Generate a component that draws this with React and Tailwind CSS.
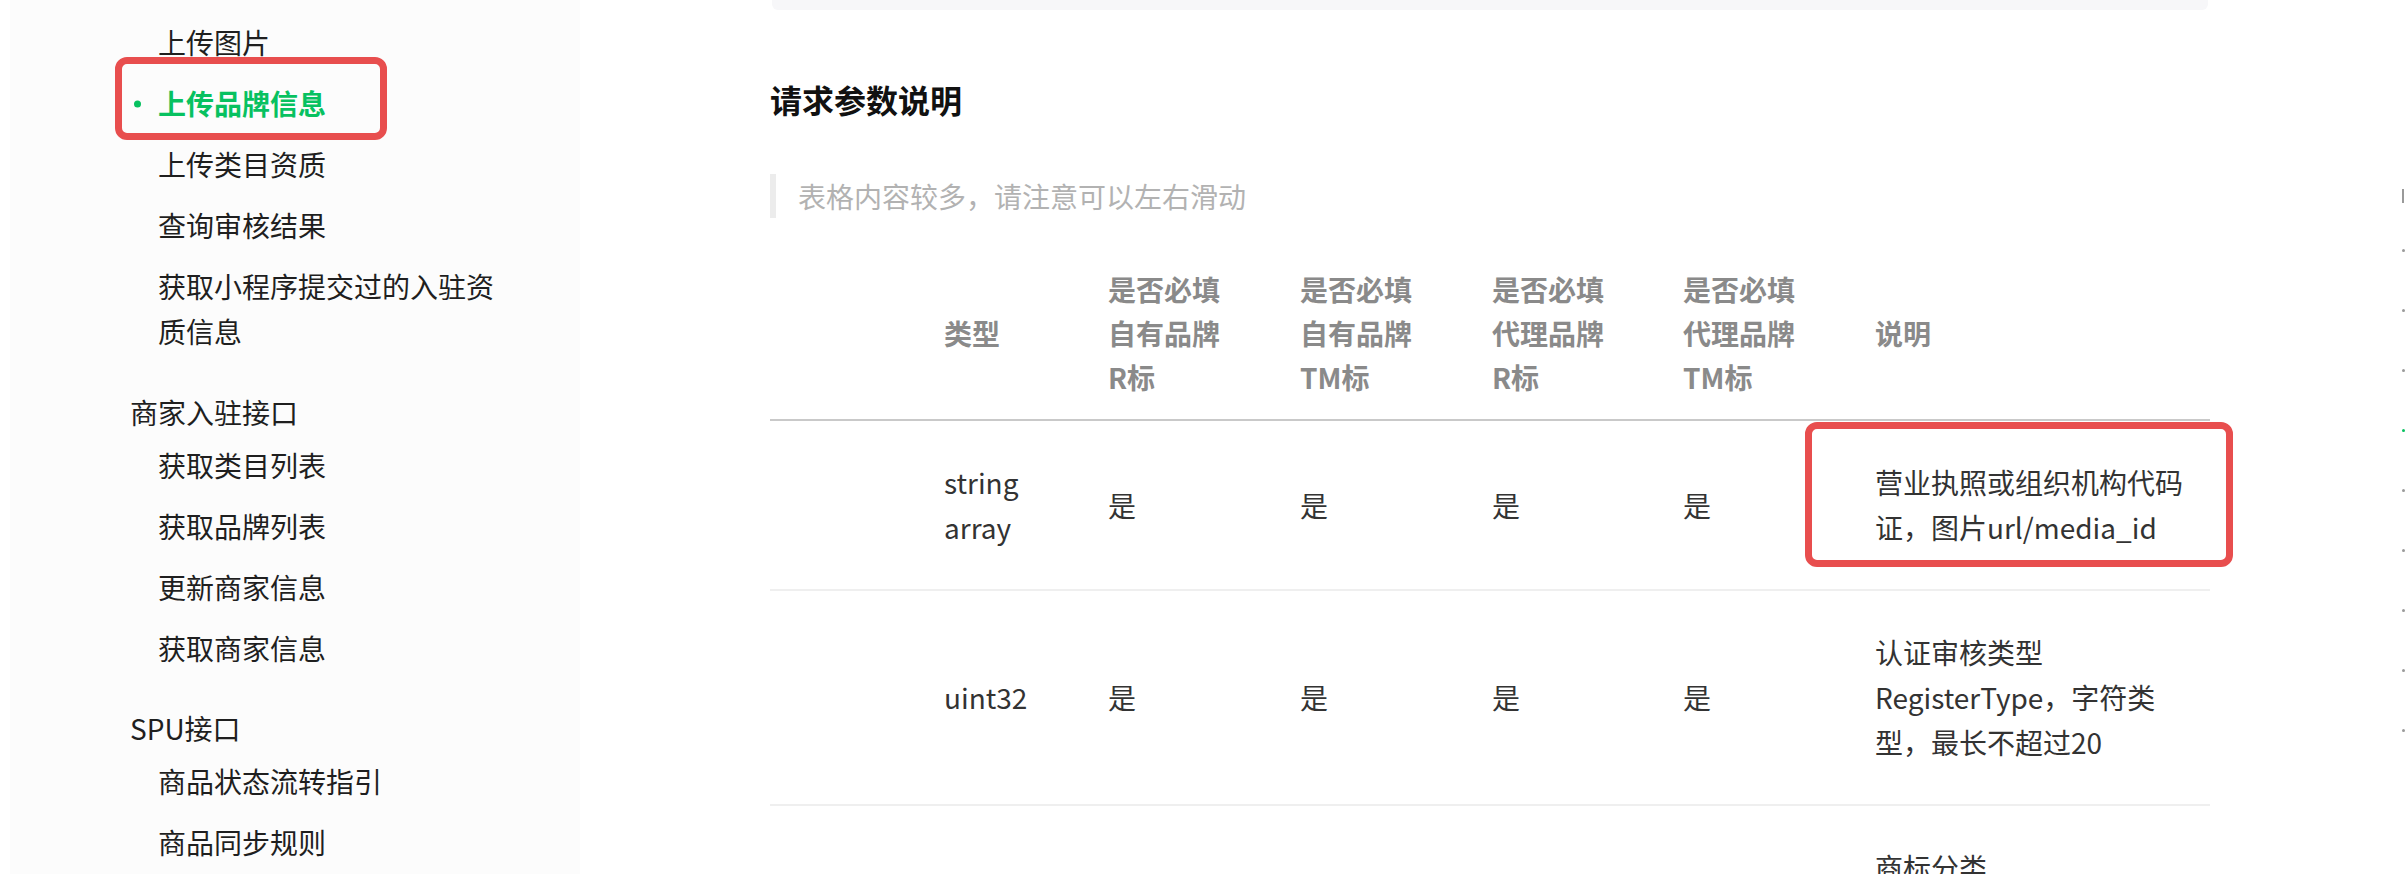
import React from 'react';

const group1 = [
  { t: '上传图片' },
  { t: '上传品牌信息', active: true },
  { t: '上传类目资质' },
  { t: '查询审核结果' },
  { t: '获取小程序提交过的入驻资', t2: '质信息' },
];
const group2 = ['获取类目列表', '获取品牌列表', '更新商家信息', '获取商家信息'];
const group3 = ['商品状态流转指引', '商品同步规则'];

function NavItem({ t, t2, active }) {
  return (
    <li className="relative py-2 pl-[28px]">
      {active && (
        <>
          <span className="absolute left-[4px] top-1/2 -translate-y-1/2 w-[7px] h-[7px] rounded-full bg-[#07c160]" />
          <span className="absolute left-[-15px] top-[-16px] w-[272px] h-[83px] border-[7px] border-[#e84e4e] rounded-[12px]" />
        </>
      )}
      {t2 ? (
        <>
          <span className="block whitespace-nowrap text-justify [text-align-last:justify]">{t}</span>
          <span className="block">{t2}</span>
        </>
      ) : (
        <span className={active ? 'font-semibold text-[#07c160]' : ''}>{t}</span>
      )}
    </li>
  );
}

function Lines({ lines }) {
  return (
    <div>
      {lines.map((l, i) => (
        <div key={i} className="whitespace-nowrap">{l}</div>
      ))}
    </div>
  );
}

export default function App() {
  const cols = 'grid grid-cols-[174px_164px_192px_192px_191px_192px_335px] items-center';
  const tocDots = [0, 1, 2, 3, 4, 5, 6, 7, 8];
  return (
    <div className="flex w-[2406px] h-[874px] overflow-hidden bg-white font-['Noto_Sans_CJK_SC','Noto_Sans',sans-serif]">
      {/* Sidebar */}
      <aside className="w-[580px] shrink-0 pl-[10px]">
        <div className="h-full bg-[#fcfcfc] pt-[12px]">
          <nav className="ml-[120px] w-[362px] text-[28px] leading-[45px] text-[#1f1f1f]">
            <ul>
              {group1.map((it) => (
                <NavItem key={it.t} t={it.t} t2={it.t2} active={it.active} />
              ))}
            </ul>
            <div className="mt-[28px]">商家入驻接口</div>
            <ul>
              {group2.map((t) => (
                <NavItem key={t} t={t} />
              ))}
            </ul>
            <div className="mt-[27px]">SPU接口</div>
            <ul>
              {group3.map((t) => (
                <NavItem key={t} t={t} />
              ))}
            </ul>
          </nav>
        </div>
      </aside>

      {/* Main content */}
      <main className="ml-[190px] w-[1440px] shrink-0">
        <div className="mx-[2px] h-[10px] rounded-b-[6px] bg-[#f7f7f9]" />
        <h2 className="mt-[67px] text-[32px] leading-[44px] font-bold text-[#111111]">请求参数说明</h2>
        <div className="mt-[53px] border-l-[6px] border-[#ececec] pl-[22px] text-[28px] leading-[44px] text-[#b2b2b2]">
          表格内容较多，请注意可以左右滑动
        </div>

        <div className="mt-[29px] text-[28px]">
          <div className={`${cols} pt-[20px] pb-[20px] border-b-2 border-[#c9c9c9] leading-[44px] font-semibold text-[#8a8a8a]`}>
            <div />
            <div>类型</div>
            <Lines lines={['是否必填', '自有品牌', 'R标']} />
            <Lines lines={['是否必填', '自有品牌', 'TM标']} />
            <Lines lines={['是否必填', '代理品牌', 'R标']} />
            <Lines lines={['是否必填', '代理品牌', 'TM标']} />
            <div>说明</div>
          </div>

          <div className={`${cols} py-[39px] border-b-2 border-[#efefef] leading-[45px] text-[#333333]`}>
            <div />
            <Lines lines={['string', 'array']} />
            <div>是</div>
            <div>是</div>
            <div>是</div>
            <div>是</div>
            <div className="relative">
              <span className="absolute left-[-70px] top-[-38px] w-[428px] h-[145px] border-[7px] border-[#e84e4e] rounded-[12px]" />
              <Lines lines={['营业执照或组织机构代码', '证，图片url/media_id']} />
            </div>
          </div>

          <div className={`${cols} py-[39px] border-b-2 border-[#efefef] leading-[45px] text-[#333333]`}>
            <div />
            <div>uint32</div>
            <div>是</div>
            <div>是</div>
            <div>是</div>
            <div>是</div>
            <Lines lines={['认证审核类型', 'RegisterType，字符类', '型，最长不超过20']} />
          </div>

          <div className={`${cols} items-start py-[39px] leading-[45px] text-[#333333]`}>
            <div />
            <div />
            <div />
            <div />
            <div />
            <div />
            <Lines lines={['商标分类']} />
          </div>
        </div>
      </main>

      {/* Right TOC, clipped at the viewport edge */}
      <div className="ml-[191px] w-[5px] shrink-0 overflow-hidden pt-[189px]">
        <div className="ml-[1px] w-[2px] h-[14px] bg-[#9a9a9a]" />
        <div className="mt-[17px] flex flex-col">
          {tocDots.map((i) => (
            <div key={i} className="h-[60px] flex items-center">
              <span className={i === 3 ? 'ml-[1px] w-[3px] h-[3px] rounded-full bg-[#07c160]' : 'ml-[1px] w-[3px] h-[3px] rounded-full bg-[#9a9a9a]'} />
            </div>
          ))}
        </div>
      </div>
    </div>
  );
}
